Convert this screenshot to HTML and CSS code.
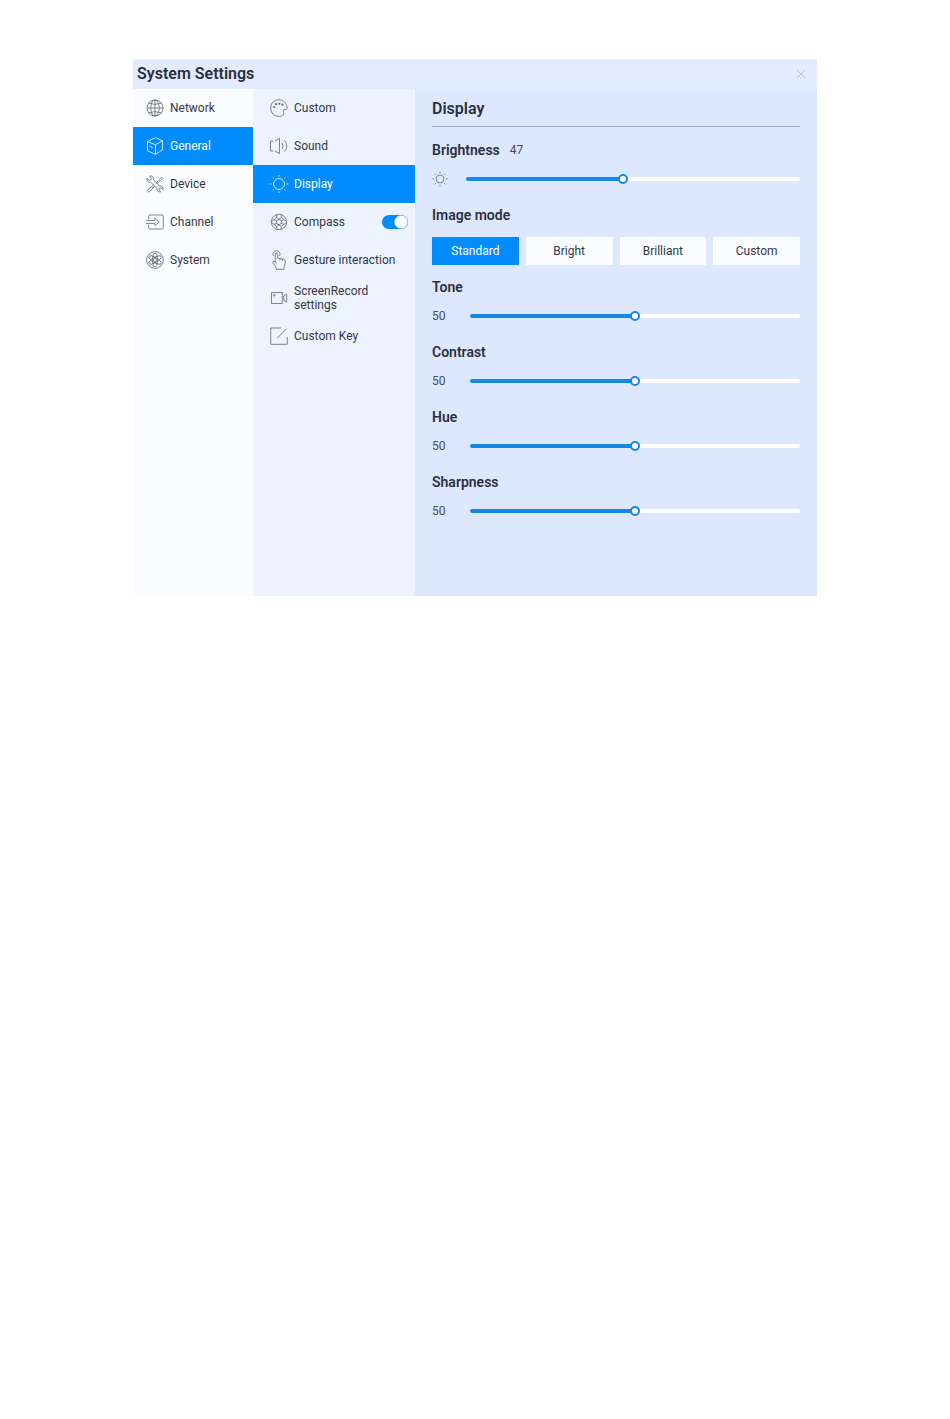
FILE: index.html
```html
<!DOCTYPE html>
<html lang="en">
<head>
    <meta charset="UTF-8">
    <meta name="viewport" content="width=device-width, initial-scale=1.0">
    <title>System Settings</title>
    <link rel="stylesheet" href="styles.css">
</head>
<body>
    <div class="settings-window">
        <header class="header">
            <h1>System Settings</h1>
            <button class="close-button" aria-label="Close">
                <svg viewBox="0 0 10 10" width="10" height="10"><path d="M0.5 0.5l9 9M9.5 0.5l-9 9"/></svg>
            </button>
        </header>
        <div class="body">
            <nav class="menu main-menu" aria-label="Categories">
                <a class="menu-item" href="#network">
                    <svg class="icon" viewBox="0 0 18 18"><circle cx="9" cy="9" r="8"/><ellipse cx="9" cy="9" rx="4.2" ry="8"/><path d="M9 1v16M1 9h16M2.8 4q6.200 2.800 12.400 0M2.800 14q6.200-2.800 12.400 0"/></svg>
                    <span>Network</span>
                </a>
                <a class="menu-item active" href="#general">
                    <svg class="icon" viewBox="0 0 18 18"><path d="M9.500 0.600l7 3.200v9L9.500 17.400l-8-3.600V4.600zM1.500 4.600l8 3.200 7-4M9.500 7.800v9.600M3.500 9.200l3.200 1.300"/></svg>
                    <span>General</span>
                </a>
                <a class="menu-item" href="#device">
                    <svg class="icon" viewBox="0 0 18 18"><path d="M1 3.400l2.200 1.800 1.700-.4.500-1.700L3.600 1Q5.800.6 7 2q.9 1.200.4 2.800l6.300 6.200q1.600-.4 2.700.7 1.100 1.200.6 3.100l-2-1.900-1.600.4-.5 1.700 1.900 1.900q-2.100.3-3.200-.9-.9-1.200-.5-2.600L4.700 7.200q-1.700.5-2.900-.7Q.6 5.200 1 3.400z"/><path d="M15.600 2.200l1.200 1.200-2 2.300-1.100.3-2.700 2.800M13.200 5.300l.5-1.100 1.900-2M12.500 5.800L9.900 8.300M5.700 11.600l1.300 1.300-3.300 3.700q-1 .8-1.900-.1t.1-1.900zM7 12.900l1.800-1.800M5.700 11.600l1.800-1.800"/></svg>
                    <span>Device</span>
                </a>
                <a class="menu-item" href="#channel">
                    <svg class="icon" viewBox="0 0 18 18"><path d="M2.700 6.500V3.200q0-1.200 1.200-1.200h12.200q1.200 0 1.200 1.200v11.600q0 1.200-1.200 1.200H3.900q-1.200 0-1.200-1.200v-3.300M0 7.600h8.800V5.400L13.300 9l-4.500 3.600v-2.200H0"/></svg>
                    <span>Channel</span>
                </a>
                <a class="menu-item" href="#system">
                    <svg class="icon" viewBox="0 0 18 18"><circle cx="9" cy="9" r="8.400"/><circle cx="9" cy="9" r="1.600"/><ellipse cx="9" cy="9" rx="2.600" ry="7"/><ellipse cx="9" cy="9" rx="2.600" ry="7" transform="rotate(60 9 9)"/><ellipse cx="9" cy="9" rx="2.600" ry="7" transform="rotate(120 9 9)"/></svg>
                    <span>System</span>
                </a>
            </nav>

            <nav class="menu sub-menu" aria-label="General">
                <a class="menu-item" href="#custom">
                    <svg class="icon" viewBox="0 0 18 18"><path d="M15.800 5.200Q14 .7 9 .7.700 1.200.7 9q.3 8 7.800 8.400 4.700.2 5.200-2.600.2-1.700-.4-2.900-.2-1.400 1.400-1.300 2.200.2 2.500-.9.200-2-1.400-4.500z"/><g class="dots"><circle cx="4.200" cy="8" r="1.100"/><circle cx="6" cy="5.200" r="1.100"/><circle cx="9.300" cy="4.800" r="1.100"/><circle cx="12.500" cy="5.700" r="1.100"/></g></svg>
                    <span>Custom</span>
                </a>
                <a class="menu-item" href="#sound">
                    <svg class="icon" viewBox="0 0 18 18"><path d="M3.500 4H.5v10h3M5 4l4.500-2.700v15.400L5 14M12 6q2.200 3 0 6M14.500 3.500q4.600 5.500 0 11"/></svg>
                    <span>Sound</span>
                </a>
                <a class="menu-item active" href="#display">
                    <svg class="icon" viewBox="0 0 18 18"><circle cx="9" cy="9" r="5.500"/><path d="M9 0v1.500M9 16.500V18M-.5 9h2M16.500 9h2M2.600 2.600l1 1M14.400 14.400l1 1M15.400 2.600l-1 1M3.600 14.400l-1 1"/></svg>
                    <span>Display</span>
                </a>
                <div class="menu-item">
                    <svg class="icon" viewBox="0 0 18 18"><circle cx="9" cy="9" r="7.700"/><path d="M9 6.300l2.400 1.400v2.700L9 11.800l-2.400-1.400V7.700zM9 6.300L6.600 4.500 6.900 1.600M9 6.300l2.400-1.800-.3-2.900M11.400 7.700l2.500-1 2.400 1.500M11.400 10.400l2.500 1 2.300-1.400M9 11.800l-2.400 1.700.3 2.900M9 11.800l2.400 1.700-.3 2.900M6.600 7.700l-2.500-1-2.400 1.500M6.600 10.400l-2.500 1L1.800 10M6.600 4.500L4.100 6.700M11.400 4.500l2.500 2.200M4.100 11.400l2.500 2.100M13.900 11.400l-2.500 2.100"/></svg>
                    <label for="compass">Compass</label>
                    <input class="switch" type="checkbox" id="compass" checked>
                </div>
                <a class="menu-item" href="#gesture">
                    <svg class="icon" viewBox="0 0 18 18"><path d="M6.500 12.500l-1.800-1.800q-.9-.7-1.700 0-.6.700 0 1.500l3 3.800v2.300h8v-2.600q1.200-1.500 1.200-3.500V9.500q-.3-1.200-1.500-1.300l-6-1V3q-.2-1.100-1.200-1.100T5.300 3v8.300M10 7.500v2M12.600 8v2M3.400 5Q2.300 3.200 3.500 1.300 4.600-.2 6.500-.2t3 1.500q1.200 1.900.1 3.700"/></svg>
                    <span>Gesture interaction</span>
                </a>
                <a class="menu-item" href="#screenrecord">
                    <svg class="icon" viewBox="0 0 18 18"><path d="M1.500 3.500h10.800v11H1.500zM13.800 7l2.900-2v8.200l-2.900-2z"/><circle cx="4.200" cy="6.200" r="0.900"/></svg>
                    <span>ScreenRecord settings</span>
                </a>
                <a class="menu-item" href="#customkey">
                    <svg class="icon" viewBox="0 0 18 18"><path d="M11 1H.7v16.300h16.600V10M7.200 11.200L16.800 1.500"/></svg>
                    <span>Custom Key</span>
                </a>
            </nav>

            <main class="content">
                <h2 class="content-title">Display</h2>

                <div class="setting">
                    <div class="setting-label">
                        <label for="brightness">Brightness</label>
                        <output class="value" for="brightness">47</output>
                    </div>
                    <div class="slider-row">
                        <svg class="icon brightness-icon" viewBox="0 0 18 18"><circle cx="9" cy="9" r="4.500"/><path d="M9 .5v2M9 15.500v2M.5 9h2M15.500 9h2M3 3l1.400 1.400M13.600 13.600L15 15M15 3l-1.400 1.400M4.400 13.600L3 15"/></svg>
                        <input type="range" id="brightness" min="0" max="100" value="47" style="--value: 47%">
                    </div>
                </div>

                <div class="setting mode-setting">
                    <div class="setting-label" id="imageMode">Image mode</div>
                    <div class="modes" role="group" aria-labelledby="imageMode">
                        <button class="mode-button selected">Standard</button>
                        <button class="mode-button">Bright</button>
                        <button class="mode-button">Brilliant</button>
                        <button class="mode-button">Custom</button>
                    </div>
                </div>

                <div class="setting">
                    <label class="setting-label" for="tone">Tone</label>
                    <div class="slider-row">
                        <output class="value level" for="tone">50</output>
                        <input type="range" id="tone" min="0" max="100" value="50" style="--value: 50%">
                    </div>
                </div>

                <div class="setting">
                    <label class="setting-label" for="contrast">Contrast</label>
                    <div class="slider-row">
                        <output class="value level" for="contrast">50</output>
                        <input type="range" id="contrast" min="0" max="100" value="50" style="--value: 50%">
                    </div>
                </div>

                <div class="setting">
                    <label class="setting-label" for="hue">Hue</label>
                    <div class="slider-row">
                        <output class="value level" for="hue">50</output>
                        <input type="range" id="hue" min="0" max="100" value="50" style="--value: 50%">
                    </div>
                </div>

                <div class="setting">
                    <label class="setting-label" for="sharpness">Sharpness</label>
                    <div class="slider-row">
                        <output class="value level" for="sharpness">50</output>
                        <input type="range" id="sharpness" min="0" max="100" value="50" style="--value: 50%">
                    </div>
                </div>
            </main>
        </div>
    </div>

    <script>
        // Keep the filled part of the track and the number in step with the slider
        document.querySelectorAll('input[type="range"]').forEach(function(slider) {
            slider.addEventListener('input', function() {
                slider.style.setProperty('--value', slider.value + '%');
                document.querySelector('output[for="' + slider.id + '"]').textContent = slider.value;
            });
        });

        document.querySelectorAll('.mode-button').forEach(function(button) {
            button.addEventListener('click', function() {
                document.querySelector('.mode-button.selected').classList.remove('selected');
                button.classList.add('selected');
            });
        });
    </script>
</body>
</html>
```
FILE: styles.css
```css
* {
    box-sizing: border-box;
}
body {
    font-family: Roboto, Arial, sans-serif;
    font-size: 12px;
    line-height: 14px;
    color: #333846;
    margin: 0;
    padding: 59px 14%;
    background: white;
}
.settings-window {
    background-color: #dde7fe;
}
.header {
    display: flex;
    justify-content: space-between;
    align-items: center;
    height: 30px;
    padding: 0 11px 0 4px;
    background-color: #e2ecfe;
}
h1, h2 {
    margin: 0;
    font-size: 16px;
    font-weight: 600;
    line-height: 20px;
    color: #2b303c;
}
button {
    font: inherit;
    color: inherit;
    border: none;
    cursor: pointer;
}
.close-button {
    display: flex;
    padding: 0;
    background: none;
}
.close-button svg {
    fill: none;
    stroke: #bcc4d2;
}
.body {
    display: grid;
    grid-template-columns: 120px 162px 1fr;
}
.main-menu {
    background-color: #fafcff;
}
.sub-menu {
    background-color: #edf3ff;
}
.menu-item {
    display: flex;
    align-items: center;
    gap: 6px;
    height: 38px;
    padding: 0 7px 0 13px;
    color: inherit;
    text-decoration: none;
}
.sub-menu .menu-item {
    padding-left: 17px;
}
.menu-item span {
    max-width: 104px;
}
.menu-item.active {
    background-color: #008cff;
    color: white;
}
.icon {
    flex: none;
    width: 18px;
    height: 18px;
    overflow: visible;
    fill: none;
    stroke: #5f6675;
    stroke-width: 0.8;
}
.active .icon {
    stroke: white;
}
.dots {
    fill: #5f6675;
    stroke: none;
}
/* Toggle switch */
.switch {
    appearance: none;
    width: 26px;
    height: 14px;
    margin: 0 0 0 auto;
    border-radius: 7px;
    background: radial-gradient(circle at 7px 7px, white 6px, transparent 7px) #b5bfd0;
    cursor: pointer;
}
.switch:checked {
    background: radial-gradient(circle at 19px 7px, white 6px, transparent 7px) #008cff;
}
.content {
    padding: 0 17px 75px;
}
.content-title {
    padding: 10px 0 7px;
    margin-bottom: 13px;
    border-bottom: 1px solid #9fadc6;
}
.setting {
    margin-bottom: 16px;
}
.mode-setting {
    margin-bottom: 12px;
}
.setting:last-child {
    margin-bottom: 0;
}
.setting-label {
    display: flex;
    gap: 10px;
    font-size: 14px;
    font-weight: 600;
    line-height: 20px;
    color: #2b303c;
}
.value {
    font-size: 12px;
    font-weight: 400;
    color: #464c5a;
}
.level {
    width: 38px;
}
.slider-row {
    display: flex;
    align-items: center;
    height: 20px;
    margin-top: 9px;
}
.brightness-icon {
    width: 16px;
    height: 16px;
    margin-right: 18px;
}
.modes {
    display: grid;
    grid-template-columns: repeat(4, 1fr);
    gap: 7px;
    margin-top: 12px;
}
.mode-button {
    height: 28px;
    padding: 0;
    background-color: #fafcff;
}
.mode-button.selected {
    background-color: #008cff;
    color: white;
}
/* Sliders */
input[type="range"] {
    appearance: none;
    flex: 1;
    min-width: 0;
    height: 10px;
    margin: 0;
    background: none;
    cursor: pointer;
}
input[type="range"]::-webkit-slider-runnable-track {
    height: 4px;
    border-radius: 2px;
    background: linear-gradient(to right, #1488e2 var(--value), white var(--value));
}
input[type="range"]::-webkit-slider-thumb {
    appearance: none;
    width: 10px;
    height: 10px;
    margin-top: -3px;
    border: 2px solid #1488e2;
    border-radius: 50%;
    background-color: white;
}
```
